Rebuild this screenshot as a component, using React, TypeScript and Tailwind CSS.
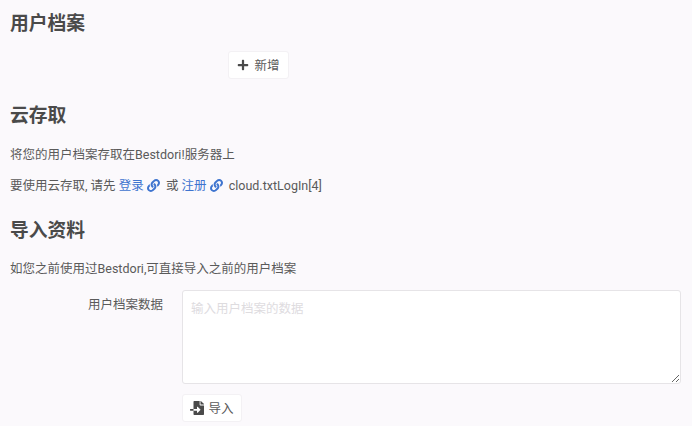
import { FaFileImport, FaLink, FaPlus } from "react-icons/fa";

const font = "font-['Roboto','Noto_Sans_CJK_SC',sans-serif]";

function Heading({ children, className }: { children: string; className: string }) {
  return <h2 className={`text-[18.75px] leading-[26px] font-bold text-[#4a4a4a] ${className}`}>{children}</h2>;
}

function DocLink({ children }: { children: string }) {
  return (
    <a className="inline-flex items-center gap-[3px] text-[#3e74cf]">
      {children}
      <FaLink className="h-[13px] w-[13px]" />
    </a>
  );
}

export default function App() {
  return (
    <div className={`h-[426px] w-[692px] overflow-hidden bg-[#fbf9fc] pl-[10px] pr-[11px] pt-[11px] text-[12.5px] leading-[19px] text-[#5a5a5a] ${font}`}>
      <Heading className="">用户档案</Heading>

      <div className="ml-[218px] mt-[14px] flex">
        <button className="flex h-[28px] w-[61px] items-center justify-center gap-[5px] rounded-[3px] border border-[#f3f1f4] bg-white text-[#5a5a5a]">
          <FaPlus className="h-[12px] w-[12px] text-[#4a4a4a]" />
          新增
        </button>
      </div>

      <Heading className="mt-[24px]">云存取</Heading>

      <p className="mt-[16px]">将您的用户档案存取在Bestdori!服务器上</p>

      <p className="mt-[12px] flex items-center whitespace-pre">
        要使用云存取, 请先 <DocLink>登录</DocLink>  或 <DocLink>注册</DocLink>  cloud.txtLogIn[4]
      </p>

      <Heading className="mt-[23px]">导入资料</Heading>

      <p className="mt-[15px]">如您之前使用过Bestdori,可直接导入之前的用户档案</p>

      <div className="mt-[12px] flex">
        <label className="w-[153px] pt-[5px] text-right">用户档案数据</label>
        <div className="ml-[19px] flex-1">
          <textarea
            readOnly
            placeholder="输入用户档案的数据"
            className="block h-[94px] w-full rounded-[3px] border border-[#e6e4e7] bg-white px-[8px] py-[8px] text-[12.5px] leading-[19px] placeholder:text-[#dedcdf]"
          />
          <button className="mt-[10px] flex h-[28px] w-[60px] items-center justify-center gap-[4px] rounded-[3px] border border-[#f3f1f4] bg-white text-[#5a5a5a]">
            <FaFileImport className="h-[14px] w-[14px] text-[#4a4a4a]" />
            导入
          </button>
        </div>
      </div>
    </div>
  );
}
